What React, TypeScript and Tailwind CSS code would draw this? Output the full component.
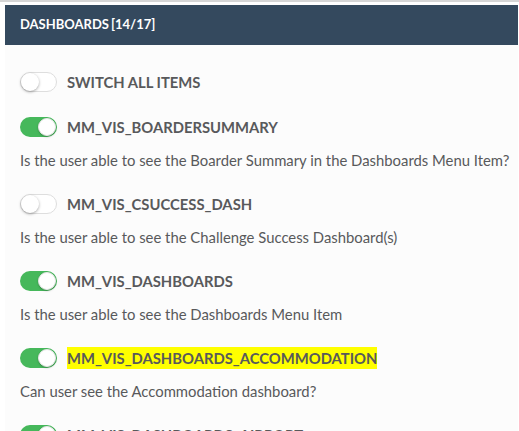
import React from "react";

type Item = { name: string; desc?: string; on: boolean; highlight?: boolean };

const items: Item[] = [
  { name: "MM_VIS_BOARDERSUMMARY", desc: "Is the user able to see the Boarder Summary in the Dashboards Menu Item?", on: true },
  { name: "MM_VIS_CSUCCESS_DASH", desc: "Is the user able to see the Challenge Success Dashboard(s)", on: false },
  { name: "MM_VIS_DASHBOARDS", desc: "Is the user able to see the Dashboards Menu Item", on: true },
  { name: "MM_VIS_DASHBOARDS_ACCOMMODATION", desc: "Can user see the Accommodation dashboard?", on: true, highlight: true },
  { name: "MM_VIS_DASHBOARDS_AIRPORT", on: true },
];

function Toggle({ on }: { on: boolean }) {
  return on ? (
    <div className="relative h-5 w-[37px] shrink-0 rounded-full bg-[#46b85b]">
      <div className="absolute right-[1px] top-[1px] h-[18px] w-[18px] rounded-full border border-[#e5e5e5] bg-white shadow-[0_1px_2px_rgba(0,0,0,0.25)]" />
    </div>
  ) : (
    <div className="relative h-5 w-[37px] shrink-0 rounded-full border border-[#dedede] bg-white">
      <div className="absolute left-0 top-0 h-[18px] w-[18px] rounded-full bg-white shadow-[0_1px_3px_rgba(0,0,0,0.35)]" />
    </div>
  );
}

export default function App() {
  return (
    <div className="h-[431px] w-[519px] overflow-hidden bg-white" style={{ fontFamily: "Lato, 'Open Sans', sans-serif" }}>
      <div className="h-[2px] bg-[#d6d6d6]" />
      <div className="ml-[5px] mr-[1px] mt-[3px] h-[500px] bg-[#fcfcfc]">
        <div className="flex h-10 items-center bg-[#34495e] pl-[15px] text-[13px] font-bold text-white">
          <span>DASHBOARDS</span>
          <span className="ml-[2px]">[14/17]</span>
        </div>
        <div className="pl-[15px] pt-[27px] text-[#58595b]">
          <div className="flex h-5 items-center gap-[10px]">
            <Toggle on={false} />
            <span className="text-[14.8px] font-bold">SWITCH ALL ITEMS</span>
          </div>
          <div className="mt-[25px] flex flex-col">
            {items.map((it) => (
              <div key={it.name} className="mb-[24px]">
                <div className="flex h-5 items-center gap-[10px]">
                  <Toggle on={it.on} />
                  <span className={"whitespace-nowrap text-[14.8px] font-bold leading-[22px] " + (it.highlight ? "bg-[#ffff00]" : "")}>
                    {it.name}
                  </span>
                </div>
                {it.desc && <div className="mt-[13px] h-5 whitespace-nowrap text-[14.85px] leading-5">{it.desc}</div>}
              </div>
            ))}
          </div>
        </div>
      </div>
    </div>
  );
}
